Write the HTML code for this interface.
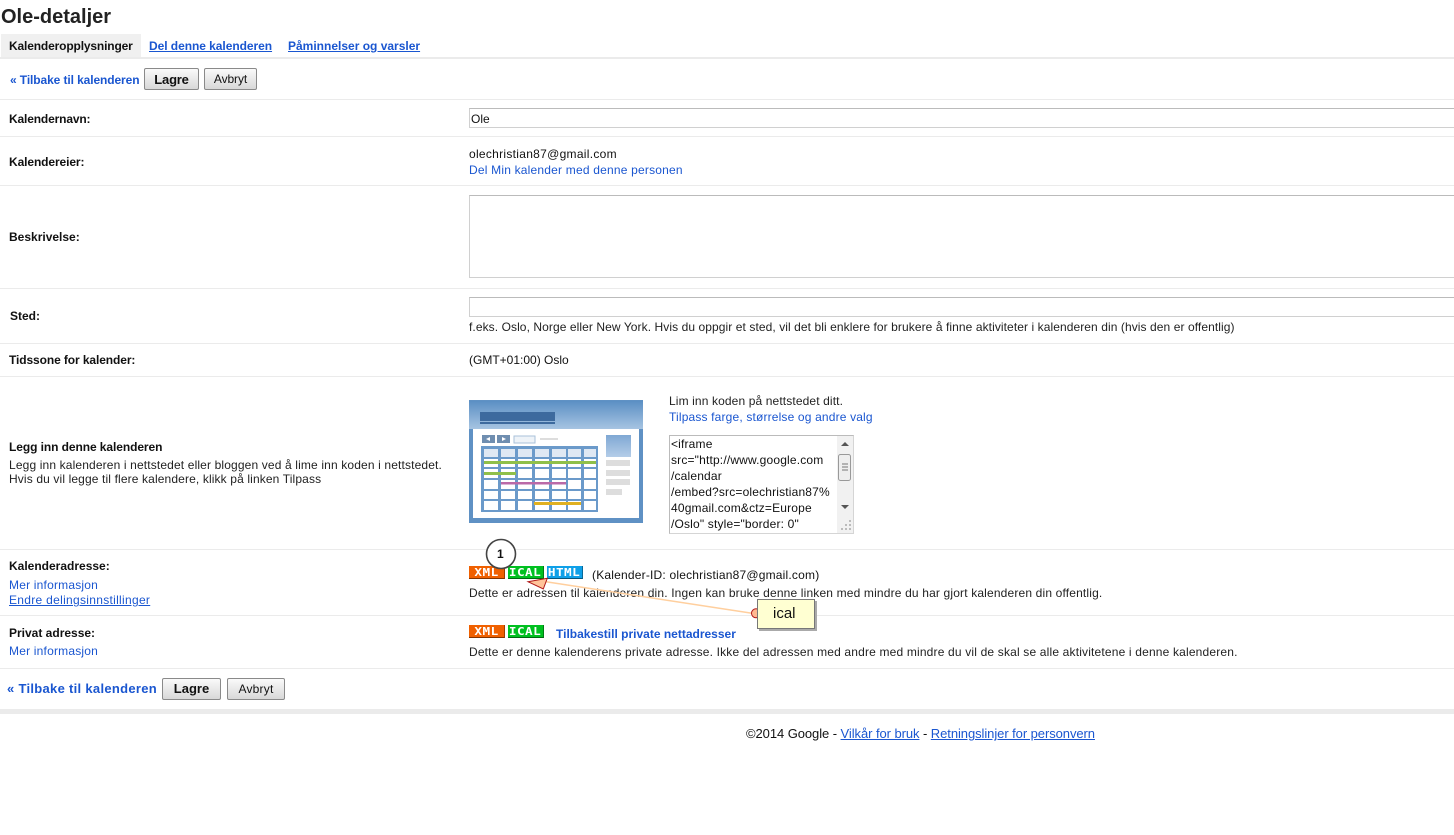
<!DOCTYPE html>
<html><head><meta charset="utf-8"><style>
html,body{margin:0;padding:0;background:#fff;width:1454px;height:835px;overflow:hidden}
body{position:relative;font:12px/14px "Liberation Sans",Arial,sans-serif;color:#222}
.t{position:absolute;white-space:nowrap}
.b{font-weight:bold;color:#111}
.a{color:#1a56d0}.u{text-decoration:underline}
.l{position:absolute;left:0;width:1454px;height:1px;background:#ebebeb}
.i{position:absolute;left:469px;width:990px;border:1px solid #d0d0d0;border-top-color:#bbb;box-sizing:border-box;background:#fff}
.btn{position:absolute;box-sizing:border-box;border:1px solid #8a8a8a;border-radius:2px;background:linear-gradient(#fafafa,#d8d8d8);text-align:center;color:#111}
.tag{position:absolute;height:13px;box-sizing:border-box;padding-top:1px;color:#fff;font:bold 11px/11px "DejaVu Sans Mono","Liberation Mono",monospace;text-align:center;border-bottom:1px solid rgba(0,0,0,.45);border-right:1px solid rgba(0,0,0,.35)}
.tag span{display:inline-block;transform:scaleX(1.15);letter-spacing:.4px}
</style></head><body>
<div class="t" style="left:1px;top:6px;font:bold 20px/22px 'Liberation Sans',sans-serif;color:#222">Ole-detaljer</div>
<div style="position:absolute;left:1px;top:34px;width:140px;height:23px;background:#f0f0f0"></div>
<div style="position:absolute;left:0;top:57px;width:1454px;height:2px;background:#ebebeb"></div>
<div class="t b" style="left:9px;top:39px;letter-spacing:-.15px">Kalenderopplysninger</div>
<div class="t b a u" style="left:149px;top:39px;letter-spacing:-.05px">Del denne kalenderen</div>
<div class="t b a u" style="left:288px;top:39px">Påminnelser og varsler</div>

<div class="t b a" style="left:10px;top:73px;letter-spacing:-.1px">« Tilbake til kalenderen</div>
<div class="btn b" style="left:144px;top:68px;width:55px;height:22px;line-height:21px;font-size:13px;letter-spacing:-.2px">Lagre</div>
<div class="btn" style="left:204px;top:68px;width:53px;height:22px;line-height:21px;letter-spacing:-.1px">Avbryt</div>

<div class="l" style="top:99px"></div><div class="l" style="top:136px"></div><div class="l" style="top:185px"></div><div class="l" style="top:288px"></div><div class="l" style="top:343px"></div><div class="l" style="top:376px"></div><div class="l" style="top:549px"></div><div class="l" style="top:615px"></div><div class="l" style="top:668px"></div>

<div class="t b" style="left:9px;top:112px;letter-spacing:-.15px">Kalendernavn:</div>
<div class="i" style="top:108px;height:20px"></div>
<div class="t" style="left:471px;top:112px;color:#111">Ole</div>

<div class="t b" style="left:9px;top:155px;letter-spacing:-.1px">Kalendereier:</div>
<div class="t" style="left:469px;top:147px;color:#111;letter-spacing:.29px">olechristian87@gmail.com</div>
<div class="t a" style="left:469px;top:163px;letter-spacing:.2px">Del Min kalender med denne personen</div>

<div class="t b" style="left:9px;top:230px">Beskrivelse:</div>
<div class="i" style="top:195px;height:83px"></div>

<div class="t b" style="left:10px;top:309px">Sted:</div>
<div class="i" style="top:297px;height:20px"></div>
<div class="t" style="left:469px;top:320px;letter-spacing:.08px">f.eks. Oslo, Norge eller New York. Hvis du oppgir et sted, vil det bli enklere for brukere å finne aktiviteter i kalenderen din (hvis den er offentlig)</div>

<div class="t b" style="left:9px;top:353px;letter-spacing:-.1px">Tidssone for kalender:</div>
<div class="t" style="left:469px;top:353px;color:#111">(GMT+01:00) Oslo</div>

<div class="t b" style="left:9px;top:440px;letter-spacing:-.08px">Legg inn denne kalenderen</div>
<div class="t" style="left:9px;top:458px;letter-spacing:.14px">Legg inn kalenderen i nettstedet eller bloggen ved å lime inn koden i nettstedet.</div>
<div class="t" style="left:9px;top:472px;letter-spacing:.13px">Hvis du vil legge til flere kalendere, klikk på linken Tilpass</div>

<svg style="position:absolute;left:469px;top:400px;filter:blur(.35px)" width="174" height="123" viewBox="0 0 174 123">
<defs><linearGradient id="g" x1="0" y1="0" x2="0" y2="1"><stop offset="0" stop-color="#5b8fc4"/><stop offset="1" stop-color="#a6c4e2"/></linearGradient>
<linearGradient id="s" x1="0" y1="0" x2="0" y2="1"><stop offset="0" stop-color="#7fa8d4"/><stop offset="1" stop-color="#b4cde8"/></linearGradient></defs>
<rect width="174" height="123" fill="#5f91c4"/>
<rect y="1" width="174" height="28" fill="url(#g)"/>
<rect x="4" y="29" width="166" height="89" fill="#fff"/>
<rect x="11" y="12" width="75" height="9" fill="#3d6a9e"/><rect x="11" y="22" width="75" height="2" fill="#3d6a9e"/>
<rect x="13" y="35" width="13" height="8" fill="#6f8eb0"/><rect x="28" y="35" width="13" height="8" fill="#6f8eb0"/>
<path d="M21 37L17 39L21 41ZM33 37L37 39L33 41Z" fill="#fff"/>
<rect x="45" y="36" width="21" height="7" fill="#eef3f8" stroke="#a9c1da"/><rect x="71" y="38" width="18" height="2" fill="#ddd"/>
<rect x="12" y="46" width="117" height="66" fill="#6b9aca"/>
<rect x="137" y="35" width="25" height="22" fill="url(#s)"/>
<rect x="137" y="60" width="24" height="6" fill="#ddd"/><rect x="137" y="70" width="24" height="6" fill="#ddd"/><rect x="137" y="79" width="24" height="6" fill="#ddd"/><rect x="137" y="89" width="16" height="6" fill="#ddd"/>
<g fill="#dfe8f3"><rect x="15" y="49" width="14" height="8"/><rect x="32" y="49" width="14" height="8"/><rect x="49" y="49" width="14" height="8"/><rect x="66" y="49" width="14" height="8"/><rect x="83" y="49" width="14" height="8"/><rect x="99" y="49" width="13" height="8"/><rect x="115" y="49" width="12" height="8"/></g>
<g fill="#fff">
<rect x="15" y="59" width="14" height="8"/><rect x="32" y="59" width="14" height="8"/><rect x="49" y="59" width="14" height="8"/><rect x="66" y="59" width="14" height="8"/><rect x="83" y="59" width="14" height="8"/><rect x="99" y="59" width="13" height="8"/><rect x="115" y="59" width="12" height="8"/>
<rect x="15" y="69" width="14" height="9"/><rect x="32" y="69" width="14" height="9"/><rect x="49" y="69" width="14" height="9"/><rect x="66" y="69" width="14" height="9"/><rect x="83" y="69" width="14" height="9"/><rect x="99" y="69" width="13" height="9"/><rect x="115" y="69" width="12" height="9"/>
<rect x="15" y="80" width="14" height="9"/><rect x="32" y="80" width="14" height="9"/><rect x="49" y="80" width="14" height="9"/><rect x="66" y="80" width="14" height="9"/><rect x="83" y="80" width="14" height="9"/><rect x="99" y="80" width="13" height="9"/><rect x="115" y="80" width="12" height="9"/>
<rect x="15" y="91" width="14" height="8"/><rect x="32" y="91" width="14" height="8"/><rect x="49" y="91" width="14" height="8"/><rect x="66" y="91" width="14" height="8"/><rect x="83" y="91" width="14" height="8"/><rect x="99" y="91" width="13" height="8"/><rect x="115" y="91" width="12" height="8"/>
<rect x="15" y="101" width="14" height="9"/><rect x="32" y="101" width="14" height="9"/><rect x="49" y="101" width="14" height="9"/><rect x="66" y="101" width="14" height="9"/><rect x="83" y="101" width="14" height="9"/><rect x="99" y="101" width="13" height="9"/><rect x="115" y="101" width="12" height="9"/>
</g>
<rect x="15" y="61" width="112" height="3" fill="#8fc04a"/>
<rect x="15" y="72" width="32" height="3" fill="#8fc04a"/>
<rect x="32" y="82" width="65" height="2.5" fill="#bb6aa8"/>
<rect x="65" y="102" width="47" height="3" fill="#e0b020"/>
</svg>

<div class="t" style="left:669px;top:394px;letter-spacing:.12px">Lim inn koden på nettstedet ditt.</div>
<div class="t a" style="left:669px;top:410px;letter-spacing:.16px">Tilpass farge, størrelse og andre valg</div>

<div style="position:absolute;left:669px;top:435px;width:185px;height:99px;box-sizing:border-box;border:1px solid #bbb;border-bottom-color:#d5d5d5;border-right-color:#d5d5d5;background:#fff"></div>
<div class="t" style="left:671px;top:436px;font-size:12px;line-height:16px;color:#111;letter-spacing:.17px">&lt;iframe<br>src="http://www.google.com<br>/calendar<br>/embed?src=olechristian87%<br>40gmail.com&amp;ctz=Europe<br>/Oslo" style="border: 0"</div>
<div style="position:absolute;left:837px;top:436px;width:16px;height:97px;background:#f1f1f1"></div>
<svg style="position:absolute;left:837px;top:436px" width="16" height="97" viewBox="0 0 16 97">
<path d="M4 10 L8 6 L12 10 Z" fill="#555"/>
<rect x="1.5" y="18.5" width="12" height="26" rx="2" fill="#eee" stroke="#999"/>
<path d="M5 28H11M5 31H11M5 34H11" stroke="#777"/>
<path d="M4 69 L8 73 L12 69 Z" fill="#555"/>
<g fill="#bbb"><rect x="12" y="84" width="2" height="2"/><rect x="8" y="88" width="2" height="2"/><rect x="12" y="88" width="2" height="2"/><rect x="4" y="92" width="2" height="2"/><rect x="8" y="92" width="2" height="2"/><rect x="12" y="92" width="2" height="2"/></g>
</svg>

<div class="t b" style="left:9px;top:559px">Kalenderadresse:</div>
<div class="t a" style="left:9px;top:578px;letter-spacing:.2px">Mer informasjon</div>
<div class="t a u" style="left:9px;top:593px;letter-spacing:.3px">Endre delingsinnstillinger</div>

<div class="tag" style="left:469px;top:566px;width:36px;background:#f06000"><span>XML</span></div>
<div class="tag" style="left:508px;top:566px;width:36px;background:#00c020"><span>ICAL</span></div>
<div class="tag" style="left:547px;top:566px;width:36px;background:#0fa0e8"><span>HTML</span></div>
<div class="t" style="left:592px;top:568px;color:#111;letter-spacing:.2px">(Kalender-ID: olechristian87@gmail.com)</div>
<div class="t" style="left:469px;top:586px;letter-spacing:.16px">Dette er adressen til kalenderen din. Ingen kan bruke denne linken med mindre du har gjort kalenderen din offentlig.</div>

<div class="t b" style="left:9px;top:626px">Privat adresse:</div>
<div class="t a" style="left:9px;top:644px;letter-spacing:.2px">Mer informasjon</div>
<div class="tag" style="left:469px;top:625px;width:36px;background:#f06000"><span>XML</span></div>
<div class="tag" style="left:508px;top:625px;width:36px;background:#00c020"><span>ICAL</span></div>
<div class="t b a" style="left:556px;top:627px">Tilbakestill private nettadresser</div>
<div class="t" style="left:469px;top:645px;letter-spacing:.17px">Dette er denne kalenderens private adresse. Ikke del adressen med andre med mindre du vil de skal se alle aktivitetene i denne kalenderen.</div>

<div class="t b a" style="left:7px;top:682px;font-size:13px;letter-spacing:.3px">« Tilbake til kalenderen</div>
<div class="btn b" style="left:162px;top:678px;width:59px;height:22px;line-height:20px;font-size:13px">Lagre</div>
<div class="btn" style="left:227px;top:678px;width:58px;height:22px;line-height:20px;font-size:12px;letter-spacing:.2px">Avbryt</div>
<div style="position:absolute;left:0;top:709px;width:1454px;height:5px;background:#ebebeb"></div>

<div class="t" style="left:746px;top:727px;color:#111;font-size:13px;letter-spacing:-.07px">©2014 Google - <span class="a u">Vilkår for bruk</span> - <span class="a u">Retningslinjer for personvern</span></div>

<svg style="position:absolute;left:480px;top:535px" width="290" height="90" viewBox="0 0 290 90">
<path d="M66 46.7 L272 78.3" stroke="#ffcf9e" stroke-width="1.5"/>
<path d="M48 46.7 L67.3 43.3 L63.3 54 Z" fill="#ffc49a" stroke="#b01818" stroke-width="1"/>
<circle cx="21" cy="19" r="14.5" fill="#fff" stroke="#444" stroke-width="1.6"/>
<circle cx="276" cy="78.3" r="4.5" fill="#ffb890" stroke="#b01818"/>
</svg>
<div class="t b" style="left:497px;top:547px;font-size:12px;line-height:14px;color:#111">1</div>

<div style="position:absolute;left:757px;top:599px;width:58px;height:30px;box-sizing:border-box;border:1px solid #777;background:#ffffd2;box-shadow:2px 2px 0 #aaa;font-size:15px;line-height:28px;padding-left:15px;color:#111">ical</div>
</body></html>
